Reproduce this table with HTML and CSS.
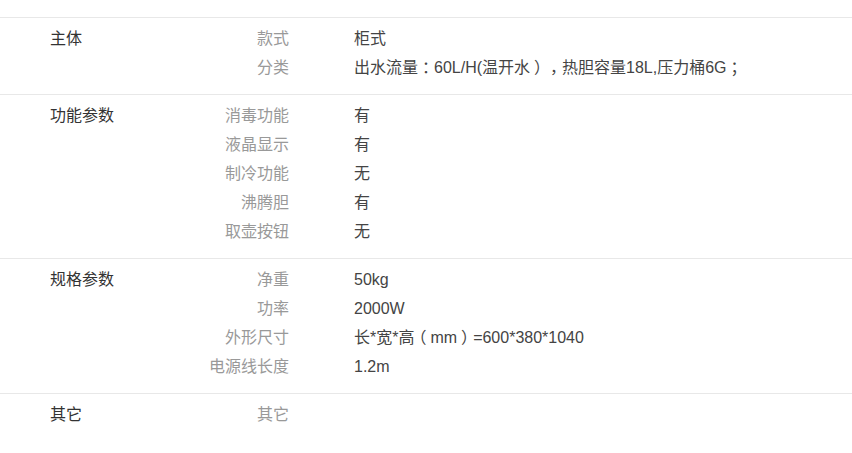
FILE: index.html
```html
<!DOCTYPE html>
<html lang="zh-CN">
<head>
    <meta charset="UTF-8">
    <meta name="viewport" content="width=device-width, initial-scale=1.0">
    <title>规格参数</title>
    <link rel="stylesheet" href="styles.css">
</head>
<body>

<div class="params">
    <div class="group">
        <div class="group-title">主体</div>
        <dl class="specs">
            <dt>款式</dt><dd>柜式</dd>
            <dt>分类</dt><dd>出水流量<span class="punct">：</span>60L/H(温开水<span class="punct">）</span><span class="punct">，</span>热胆容量18L,压力桶6G<span class="punct">；</span></dd>
        </dl>
    </div>

    <div class="group">
        <div class="group-title">功能参数</div>
        <dl class="specs">
            <dt>消毒功能</dt><dd>有</dd>
            <dt>液晶显示</dt><dd>有</dd>
            <dt>制冷功能</dt><dd>无</dd>
            <dt>沸腾胆</dt><dd>有</dd>
            <dt>取壶按钮</dt><dd>无</dd>
        </dl>
    </div>

    <div class="group">
        <div class="group-title">规格参数</div>
        <dl class="specs">
            <dt>净重</dt><dd>50kg</dd>
            <dt>功率</dt><dd>2000W</dd>
            <dt>外形尺寸</dt><dd>长*宽*高<span class="punct">（</span>mm<span class="punct">）</span>=600*380*1040</dd>
            <dt>电源线长度</dt><dd>1.2m</dd>
        </dl>
    </div>

    <div class="group">
        <div class="group-title">其它</div>
        <dl class="specs">
            <dt>其它</dt><dd></dd>
        </dl>
    </div>
</div>

</body>
</html>
```

FILE: styles.css
```css
body {
    font-family: 'Liberation Sans', 'Noto Sans CJK SC', sans-serif;
    font-size: 16px;
    background-color: #fff;
    color: #333;
    margin: 0;
}
.params {
    padding-top: 17px;
}
.group {
    display: flex;
    border-top: 1px solid #e8e8e8;
    padding: 6px 0 12px 50px;
    line-height: 29px;
}
.group-title {
    width: 159px;
    flex-shrink: 0;
    color: #333;
}
.specs {
    display: grid;
    grid-template-columns: 80px 1fr;
    column-gap: 65px;
    margin: 0;
}
.specs dt {
    text-align: right;
    color: #999;
    white-space: nowrap;
}
.specs dd {
    margin: 0;
    color: #444;
    min-height: 29px;
}
/* full-width punctuation sits centred in its cell */
.punct {
    display: inline-block;
    width: 16px;
    text-align: center;
    font-feature-settings: "halt";
    line-height: 1;
}
```
